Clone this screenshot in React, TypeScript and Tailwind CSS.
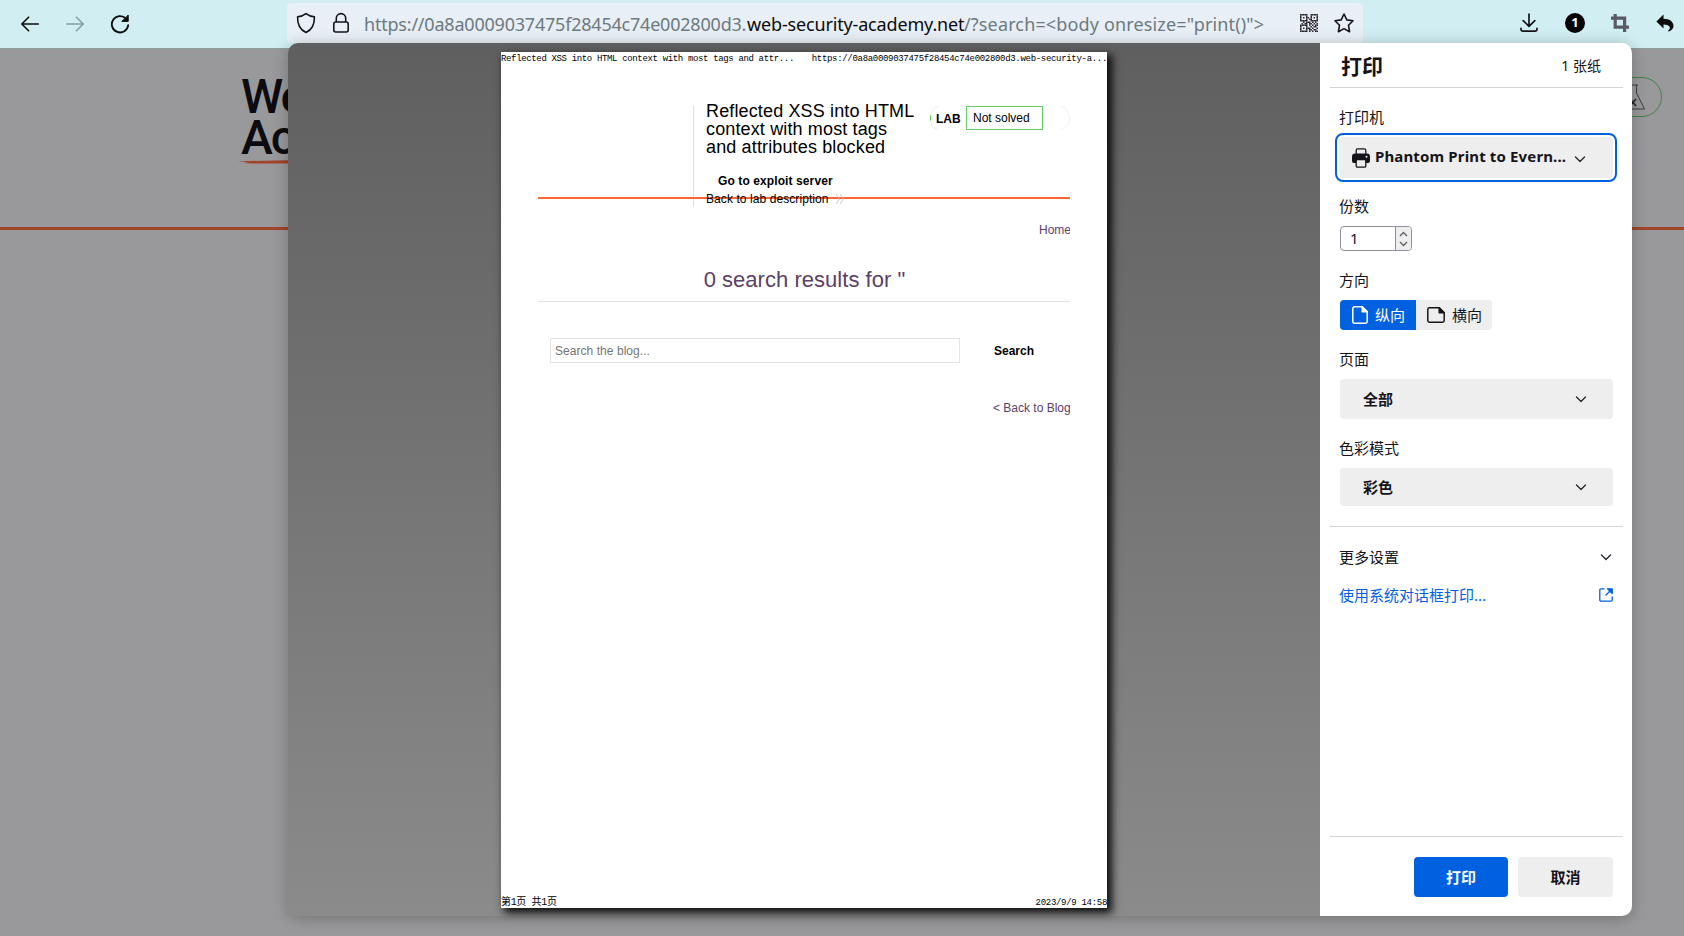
import React from "react";

const QR = [
  "111110011111",
  "100010010001",
  "101011010101",
  "100010110001",
  "111110011111",
  "001011101010",
  "010110110101",
  "111110101011",
  "100010010110",
  "101011101001",
  "100010110110",
  "111110101011",
];

function Chevron({ className = "" }: { className?: string }) {
  return (
    <svg width="12" height="12" viewBox="0 0 12 12" className={className} fill="none" stroke="#2b2a33" strokeWidth="1.4" strokeLinecap="round" strokeLinejoin="round">
      <path d="M1.5 4 6 8.4 10.5 4" />
    </svg>
  );
}

function Toolbar() {
  return (
    <header className="flex h-12 w-full items-start bg-[#d1eef2]">
      <div className="flex h-12 w-[287px] shrink-0 items-center pl-5">
        <svg width="20" height="20" viewBox="0 0 20 20" fill="none" stroke="#0c0c0d" strokeWidth="1.6" strokeLinecap="round" strokeLinejoin="round">
          <path d="M18.3 10H2M8.6 3.2 1.8 10l6.8 6.8" />
        </svg>
        <svg className="ml-[25px]" width="20" height="20" viewBox="0 0 20 20" fill="none" stroke="#869ca0" strokeWidth="1.5" strokeLinecap="round" strokeLinejoin="round">
          <path d="M1.7 10H18M11.4 3.2l6.8 6.8-6.8 6.8" />
        </svg>
        <svg className="ml-[25px]" width="20" height="20" viewBox="0 0 20 20" fill="none" stroke="#0c0c0d" strokeWidth="1.8" strokeLinecap="round">
          <path d="M18.2 11.2A8.2 8.2 0 1 1 16 4.6" />
          <path d="M18.2 1.4v6h-6Z" fill="#0c0c0d" strokeWidth="1" strokeLinejoin="round" />
        </svg>
      </div>
      <div className="mt-[3px] flex h-10 w-[1076px] shrink-0 items-center rounded bg-[#e8eff6] pl-2">
        <svg width="22" height="22" viewBox="0 0 22 22" fill="none" stroke="#15141a" strokeWidth="1.6" strokeLinejoin="round">
          <path d="M11 1.6 C8.8 3.4 5.6 4.5 2.6 4.7 C2.3 11.8 5.2 17.7 11 20.4 C16.8 17.7 19.7 11.8 19.4 4.7 C16.4 4.5 13.2 3.4 11 1.6Z" />
        </svg>
        <svg className="ml-[13px]" width="22" height="22" viewBox="0 0 22 22" fill="none" stroke="#15141a" strokeWidth="1.6">
          <rect x="3.8" y="10" width="14.4" height="10" rx="2" />
          <path d="M6.3 10V6.3a4.7 4.7 0 0 1 9.4 0V10" />
        </svg>
        <div className="ml-3 flex w-[936px] whitespace-pre pt-px font-['Noto_Sans'] text-[18px] leading-6 text-[#6d7a7e]">
          <span className="w-[383px] tracking-[-0.21px]">https://0a8a0009037475f28454c74e002800d3.</span>
          <span className="w-[217px] tracking-[-0.16px] text-[#0c0c0d]">web-security-academy.net</span>
          <span className="tracking-[0.15px]">/?search=&lt;body onresize="print()"&gt;</span>
        </div>
        <svg width="18" height="18" viewBox="0 0 12 12" fill="#2b2a33">
          {QR.map((row, y) => row.split("").map((c, x) => (c === "1" ? <rect key={`${x}-${y}`} x={x} y={y} width="1" height="1" /> : null)))}
        </svg>
        <svg className="ml-[15px]" width="22" height="22" viewBox="0 0 22 22" fill="none" stroke="#15141a" strokeWidth="1.6" strokeLinejoin="round">
          <path d="m11 2 2.8 5.9 6.2.9-4.5 4.5 1.1 6.4L11 16.6l-5.600 3.100 1.100-6.400L2 8.800l6.200-.900Z" />
        </svg>
      </div>
      <div className="flex h-[46px] flex-1 items-center pl-[156px]">
        <svg width="20" height="20" viewBox="0 0 20 20" fill="none" stroke="#15141a" strokeWidth="1.7" strokeLinecap="round" strokeLinejoin="round">
          <path d="M10 1v12M4.2 7.6 10 13.3l5.8-5.7M2 15.4v1.2A1.6 1.6 0 0 0 3.600 18.2h12.8a1.600 1.600 0 0 0 1.600-1.600v-1.200" />
        </svg>
        <span className="ml-[26px] flex size-5 items-center justify-center rounded-full bg-black font-['Noto_Sans'] text-[13px] font-bold text-white">1</span>
        <svg className="ml-[26px]" width="18" height="18" viewBox="0 0 18 18" fill="none" stroke="#5b5b66" strokeWidth="3.2">
          <path d="M4.200 0v13.200H18M0 4.200h13.600V18" />
        </svg>
        <svg className="ml-[27px]" width="18" height="18" viewBox="0 0 18 18" fill="#0c0c0d">
          <path d="M7.500.5v4.200c6.500 0 10 3.200 10 7.300 0 2.500-1.700 4.600-4.700 5.500-.6.200-1-.5-.5-.9 3.500-2.900 1.200-6-4.800-6v4L.4 7.500Z" />
        </svg>
      </div>
    </header>
  );
}

function DimmedSite() {
  return (
    <div className="h-[888px] w-full border-t border-[#8e9a9c] bg-[#99999b]">
      <div className="flex h-[178px] items-start justify-between">
        <div className="ml-[238px] mt-[27px] flex flex-col">
          <div className="flex flex-col pl-[3px] font-['Roboto'] text-[48px] font-medium leading-[41px] tracking-[-2px] text-[#0c0b10]">
            <span>We</span>
            <span>Ac</span>
          </div>
          <svg className="mt-px" width="60" height="6" viewBox="0 0 60 6" fill="#a3452c">
            <path d="M0 2.200 60 1v3.500H12l-6-.6 4-.6Z" />
          </svg>
        </div>
        <div className="mr-[22px] mt-7 flex h-10 w-[100px] items-center justify-end rounded-full border border-[#43834a] pr-[14px]">
          <svg width="28" height="26" viewBox="0 0 28 26" fill="none" stroke="#3c3c40" strokeWidth="1">
            <path d="M9 1h10M11 1v8L2.500 25h23L17.500 9V1" />
            <path d="m11 15 6 7m0-7-6 7" strokeWidth="1.600" stroke="#222" />
          </svg>
        </div>
      </div>
      <div className="h-[3px] w-full bg-[#a3452c]" />
    </div>
  );
}

function Sheet() {
  return (
    <div className="flex h-[856px] w-[606px] flex-col bg-white font-['Liberation_Sans'] text-[12px] leading-[14px] text-black shadow-[4px_4px_8px_1px_rgba(0,0,0,0.9)]">
      <div className="flex h-3 justify-between whitespace-pre font-['Liberation_Mono'] text-[9px] leading-[14px]">
        <span className="tracking-[-0.35px]">Reflected XSS into HTML context with most tags and attr...</span>
        <span className="tracking-[-0.31px]">https://0a8a0009037475f28454c74e002800d3.web-security-a...</span>
      </div>
      <div className="ml-[37px] flex w-[532px] flex-1 flex-col">
        <div className="mt-[42px] flex h-[91px]">
          <div className="ml-[155px] h-[101px] w-px shrink-0 bg-[#e0e0e0]" />
          <div className="relative z-10 ml-3 flex w-[224px] shrink-0 flex-col whitespace-nowrap">
            <div className="mt-[-4px] text-[18px] leading-[18px] tracking-[0.14px]">
              Reflected XSS into HTML
              <br />
              context with most tags
              <br />
              and attributes blocked
            </div>
            <div className="ml-3 mt-[18px] font-bold tracking-[0.1px]">Go to exploit server</div>
            <div className="mt-1 flex items-center tracking-[0.08px]">
              Back to lab description
              <svg className="ml-1.5" width="10" height="10" viewBox="0 0 10 10" fill="none" stroke="#bbb" strokeWidth="0.8">
                <path d="m1 0 3.500 5L1 10M5 0l3.500 5L5 10" />
              </svg>
            </div>
          </div>
          <div className="flex h-6 w-[140px] shrink-0 items-center">
            <svg className="shrink-0" width="8" height="24" viewBox="0 0 8 24" fill="none" strokeWidth="1">
              <path d="M8 .5C3 2 .8 6 .5 12S3 22 8 23.500" stroke="#e4efe4" />
              <path d="M.5 9.500v5" stroke="#66cc66" />
            </svg>
            <span className="-ml-0.5 mt-[2px] w-[26px] font-bold">LAB</span>
            <span className="ml-1 flex h-6 w-[77px] shrink-0 items-center border border-[#66cc66] pb-px pl-1.5">Not solved</span>
            <svg className="ml-auto" width="9" height="24" viewBox="0 0 9 24" fill="none" stroke="#f0f0f0">
              <path d="M0 .5C5 2 8.200 6 8.500 12S5 22 0 23.500" />
            </svg>
          </div>
        </div>
        <div className="h-0.5 w-full bg-[#ff6633]" />
        <div className="mt-6 w-full overflow-hidden whitespace-nowrap text-[#5c4167]">
          <span className="block pl-[501px]">Home</span>
        </div>
        <div className="mt-[29px] pl-px text-center text-[22px] leading-7 tracking-[0.03px] text-[#5c4167]">0 search results for "</div>
        <div className="mt-[7px] h-px w-full shrink-0 bg-[#e3e3e3]" />
        <div className="ml-3 mt-9 flex items-center">
          <div className="flex h-[25px] w-[410px] items-center border border-[#e3e3e3] pl-1 text-[#757575] tracking-[0.05px]">Search the blog...</div>
          <span className="ml-[34px] font-bold">Search</span>
        </div>
        <div className="mt-[38px] overflow-hidden whitespace-nowrap pl-[455px] text-[#5c4167]">&lt; Back to Blog</div>
      </div>
      <div className="flex h-3 justify-between whitespace-pre font-['Liberation_Mono','Noto_Sans_CJK_SC',monospace] text-[9px] leading-[14px] tracking-[-0.35px]">
        <span className="text-[10px]">第1页 共1页</span>
        <span className="tracking-[-0.3px]">2023/9/9 14:58</span>
      </div>
    </div>
  );
}

function Label({ children, className }: { children: React.ReactNode; className: string }) {
  return <div className={`flex h-5 shrink-0 items-center pl-[19px] pr-[19px] ${className}`}>{children}</div>;
}

function PrintSettings() {
  return (
    <aside className="flex w-[312px] shrink-0 flex-col rounded-r-[10px] bg-white font-['Noto_Sans','Noto_Sans_CJK_SC',sans-serif] text-[15px] leading-5 text-[#15141a]">
      <div className="ml-2.5 mr-[9px] flex h-[45px] shrink-0 items-center justify-between border-b border-[#d4d4d8] pl-[11px] pr-[22px] pt-0.5">
        <h1 className="text-[21px] font-bold">打印</h1>
        <span className="text-[14px]">1 张纸</span>
      </div>
      <Label className="mt-[19px]">打印机</Label>
      <div className="ml-[15px] mt-1.5 h-[49px] w-[282px] shrink-0 rounded-lg border-2 border-[#0061e0] p-[2px]">
        <div className="flex h-full items-center rounded bg-[#eeeeee] pl-[13px]">
          <svg width="18" height="20" viewBox="0 0 18 20" fill="#15141a">
            <rect x="4.200" y=".8" width="9.600" height="7" rx="1.500" fill="#eee" stroke="#15141a" strokeWidth="1.300" />
            <path d="M3 5.500h12a3 3 0 0 1 3 3V13a2 2 0 0 1-2 2H2a2 2 0 0 1-2-2V8.500a3 3 0 0 1 3-3Z" />
            <rect x="4.200" y="11.500" width="9.600" height="7.700" rx="1.200" fill="#eee" stroke="#15141a" strokeWidth="1.300" />
            <circle cx="14.500" cy="8.800" r="1" fill="#eee" />
          </svg>
          <span className="ml-[5px] w-[199px] whitespace-nowrap pb-[3px] font-bold tracking-[0.14px]">Phantom Print to Evern...</span>
          <Chevron className="mt-[3px]" />
        </div>
      </div>
      <Label className="mt-[14px]">份数</Label>
      <div className="ml-5 mt-2.5 flex h-[25px] w-[72px] shrink-0 overflow-hidden rounded border border-[#8f8f9d]">
        <span className="flex flex-1 items-center pb-px pl-[9px]">1</span>
        <div className="flex w-4 flex-col items-center justify-center gap-1 border-l border-[#8f8f9d] bg-[#eeeeee]">
          <svg width="9" height="6" viewBox="0 0 9 6" fill="none" stroke="#5b5b66" strokeWidth="1.300"><path d="m1 5 3.500-3.500L8 5" /></svg>
          <svg width="9" height="6" viewBox="0 0 9 6" fill="none" stroke="#5b5b66" strokeWidth="1.300"><path d="m1 1 3.500 3.500L8 1" /></svg>
        </div>
      </div>
      <Label className="mt-[19px]">方向</Label>
      <div className="ml-5 mt-2.5 flex h-[30px] w-[152px] shrink-0 overflow-hidden rounded bg-[#eeeeee]">
        <div className="flex w-[76px] items-center bg-[#0061e0] pl-3 text-white">
          <svg width="16" height="18" viewBox="0 0 16 18" fill="none" stroke="white" strokeWidth="1.500" strokeLinejoin="round">
            <path d="M2.500.8h7.700l5 5v9.700a1.700 1.700 0 0 1-1.700 1.700h-11a1.700 1.700 0 0 1-1.700-1.700v-13A1.700 1.700 0 0 1 2.500.8Z" />
            <path d="M10.200.8v5h5Z" fill="white" />
          </svg>
          <span className="ml-[7px] pb-px">纵向</span>
        </div>
        <div className="flex w-[76px] items-center pl-[11px]">
          <svg width="18" height="16" viewBox="0 0 18 16" fill="none" stroke="#15141a" strokeWidth="1.500" strokeLinejoin="round">
            <path d="M2.500.8h9.700l5 5v7.700a1.700 1.700 0 0 1-1.700 1.700h-13a1.700 1.700 0 0 1-1.700-1.700v-11A1.700 1.700 0 0 1 2.500.8Z" />
            <path d="M12.200.8v5h5Z" fill="#15141a" />
          </svg>
          <span className="ml-[7px] pb-px">横向</span>
        </div>
      </div>
      <Label className="mt-[19px]">页面</Label>
      <div className="ml-5 mt-2.5 flex h-10 w-[273px] shrink-0 items-center justify-between rounded bg-[#eeeeee] pl-[23px] pr-[26px] font-bold">
        全部
        <Chevron />
      </div>
      <Label className="mt-[19px]">色彩模式</Label>
      <div className="ml-5 mt-2.5 flex h-[38px] w-[273px] shrink-0 items-center justify-between rounded bg-[#eeeeee] pl-[23px] pr-[26px] font-bold">
        彩色
        <Chevron />
      </div>
      <div className="ml-2.5 mr-[9px] mt-5 h-px shrink-0 bg-[#d4d4d8]" />
      <Label className="mt-5 justify-between">
        更多设置
        <Chevron className="mr-px" />
      </Label>
      <Label className="mt-[18px] justify-between text-[#0061e0]">
        使用系统对话框打印...
        <svg width="14" height="14" viewBox="0 0 14 14" fill="none" stroke="#0061e0" strokeWidth="1.300" strokeLinejoin="round">
          <path d="M5.500.8H2A1.200 1.200 0 0 0 .8 2v10A1.200 1.200 0 0 0 2 13.200h10a1.200 1.200 0 0 0 1.200-1.200V8.500M6.500 7.500 12.500 1.500" />
          <path d="M8.500.8h4.700v4.700Z" fill="#0061e0" />
        </svg>
      </Label>
      <div className="ml-2.5 mr-[9px] mt-auto h-px shrink-0 bg-[#d4d4d8]" />
      <div className="flex h-[79px] shrink-0 justify-end gap-2.5 pr-[19px] pt-5 font-bold">
        <div className="flex h-10 w-[94px] items-center justify-center rounded bg-[#0061e0] text-white">打印</div>
        <div className="flex h-10 w-[95px] items-center justify-center rounded bg-[#eeeeee]">取消</div>
      </div>
    </aside>
  );
}

export default function App() {
  return (
    <div className="relative h-[936px] w-[1684px] overflow-hidden">
      <Toolbar />
      <DimmedSite />
      <div className="absolute left-[288px] top-[43px] flex h-[873px] w-[1344px] rounded-[10px] shadow-[0_2px_16px_rgba(0,0,0,0.25)]">
        <div className="flex flex-1 justify-start rounded-l-[10px] bg-linear-to-b from-[#5f5f5f] to-[#8b8b8b] pl-[213px] pt-[9px]">
          <Sheet />
        </div>
        <PrintSettings />
      </div>
    </div>
  );
}
